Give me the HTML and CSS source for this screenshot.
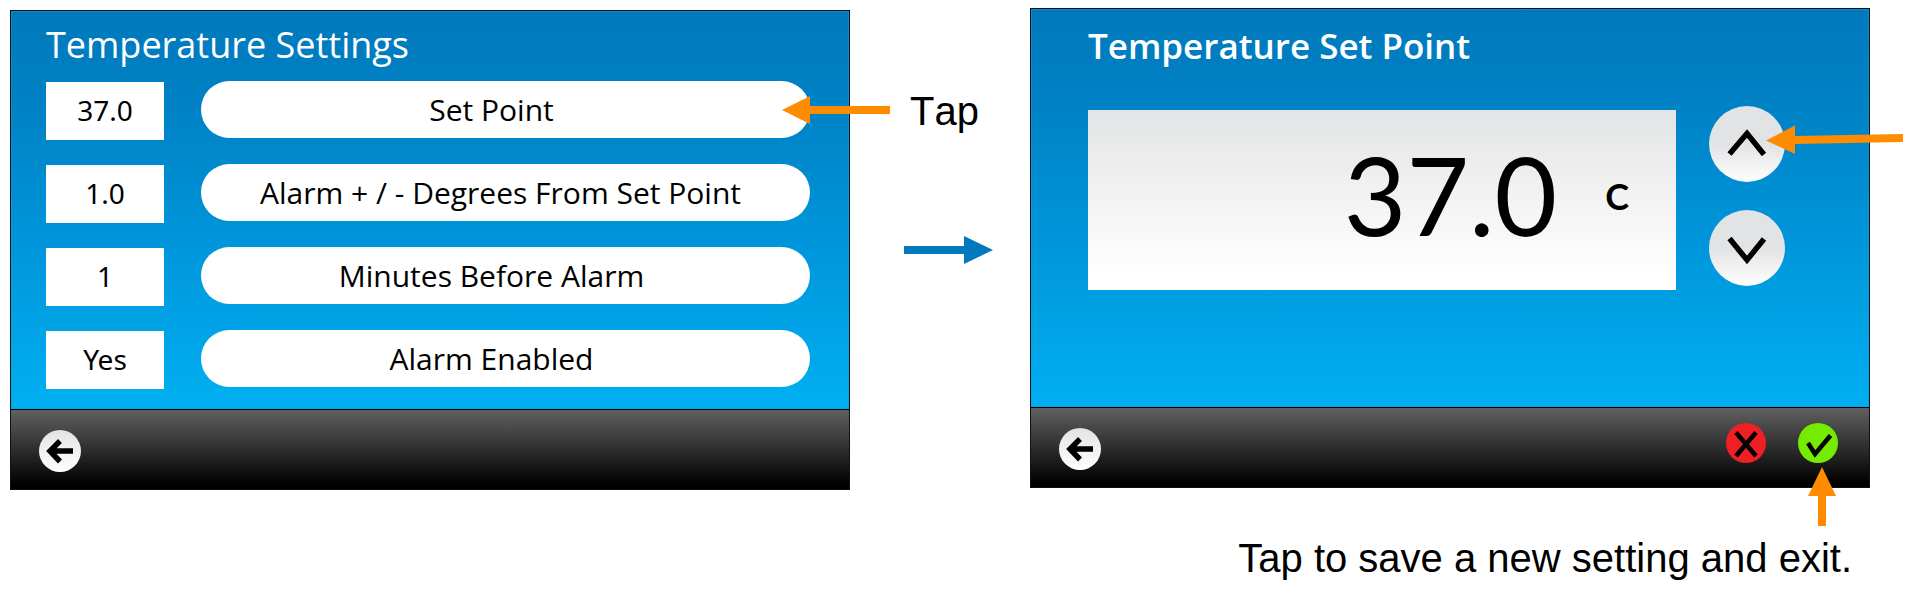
FILE: index.html
```html
<!DOCTYPE html>
<html lang="en">
<head>
<meta charset="utf-8">
<title>Temperature Settings</title>
<link rel="stylesheet" href="styles.css">
</head>
<body>
<main class="guide">
  <section class="screen screen-list">
    <div class="screen-body">
      <h1 class="title">Temperature Settings</h1>
      <div class="rows">
        <div class="row"><output class="value">37.0</output><button class="option">Set Point</button></div>
        <div class="row"><output class="value">1.0</output><button class="option option-long">Alarm + / - Degrees From Set Point</button></div>
        <div class="row"><output class="value">1</output><button class="option">Minutes Before Alarm</button></div>
        <div class="row"><output class="value">Yes</output><button class="option">Alarm Enabled</button></div>
      </div>
    </div>
    <footer class="bar">
      <button class="back" aria-label="Back"><svg width="42" height="42" viewBox="0 0 42 42"><path d="M34 21H13M21 11L11 21L21 31.500" fill="none" stroke="#000" stroke-width="5.500"/></svg></button>
    </footer>
    <svg class="pointer pointer-row" width="108" height="30" viewBox="0 0 108 30"><path d="M0 15L28 1V11H108V19H28V29Z" fill="#ff8c00"/></svg>
  </section>

  <div class="between">
    <p class="note">Tap</p>
    <svg class="next" width="89" height="28" viewBox="0 0 89 28"><path d="M0 10H60V0L89 14L60 28V18H0Z" fill="#0079bd"/></svg>
  </div>

  <div class="second">
    <section class="screen screen-edit">
      <div class="screen-body">
        <h2 class="title title-strong">Temperature Set Point</h2>
        <div class="editor">
          <output class="display"><span class="number">37.0</span><span class="unit">C</span></output>
          <div class="steppers">
            <button class="step" aria-label="Increase"><svg width="76" height="76" viewBox="0 0 76 76"><path d="M20.500 48L38 27.500L55 48.500" fill="none" stroke="#000" stroke-width="5.500"/></svg></button>
            <button class="step" aria-label="Decrease"><svg width="76" height="76" viewBox="0 0 76 76"><path d="M20.500 28.500L38 50L55 29" fill="none" stroke="#000" stroke-width="5.500"/></svg></button>
          </div>
        </div>
      </div>
      <footer class="bar">
        <button class="back" aria-label="Back"><svg width="42" height="42" viewBox="0 0 42 42"><path d="M34 21H13M21 11L11 21L21 31.500" fill="none" stroke="#000" stroke-width="5.500"/></svg></button>
        <div class="decide">
          <button class="round cancel" aria-label="Cancel"><svg width="40" height="40" viewBox="0 0 40 40"><path d="M10 9.500L30 33M30 9.500L10 33" fill="none" stroke="#000" stroke-width="4.500"/></svg></button>
          <button class="round save" aria-label="Save"><svg width="40" height="40" viewBox="0 0 40 40"><path d="M10 20L17 31L32.500 12.500" fill="none" stroke="#000" stroke-width="4.500"/></svg></button>
        </div>
      </footer>
      <svg class="pointer pointer-up" width="137" height="30" viewBox="0 0 137 30"><path d="M0 15.500L29 0.500V11L137 9V17L29 19V29Z" fill="#ff8c00"/></svg>
      <svg class="pointer pointer-save" width="28" height="59" viewBox="0 0 28 59"><path d="M14 0L28 29H18V59H10V29H0Z" fill="#ff8c00"/></svg>
    </section>
    <p class="note caption">Tap to save a new setting and exit.</p>
  </div>
</main>
</body>
</html>
```
FILE: styles.css
```css
* { box-sizing: border-box; }
body {
  margin: 0;
  background: #fff;
  color: #000;
  font-family: "Open Sans", "Noto Sans", sans-serif;
  font-variant-ligatures: none;
}
h1, h2, p { margin: 0; }
button { padding: 0; border: 0; font: inherit; color: inherit; cursor: pointer; }
svg { display: block; }

.guide {
  display: grid;
  grid-template-columns: 840fr 180fr 840fr;
  align-items: start;
  padding: 8px 40px 0 10px;
}
.screen { position: relative; border: 1px solid #111; }
.screen-list { margin-top: 2px; }
.screen-body {
  height: 399px;
  border-bottom: 1px solid #000;
  background: linear-gradient(#0079bb, #0082c6 25%, #0095da 58%, #00adef 96%);
  box-shadow: inset 0 0 0 1px rgba(0, 165, 235, 0.5);
}
.screen-list .screen-body { padding: 11px 39px 0 35px; }
.screen-edit .screen-body { padding: 14px 84px 0 57px; }
.title { font-size: 36px; line-height: 46px; font-weight: 500; color: #fff; }
.title-strong { font-size: 35px; font-weight: 600; }

.rows { display: grid; gap: 23px; margin-top: 13px; }
.row { display: flex; align-items: flex-start; justify-content: space-between; gap: 37px; height: 60px; }
.value {
  flex: none;
  width: 118px;
  height: 58px;
  margin-top: 1px;
  background: #fff;
  font-family: "Noto Sans", sans-serif;
  font-size: 28px;
  line-height: 56px;
  text-align: center;
}
.option {
  flex: 1;
  height: 57px;
  padding: 0 28px 0 0;
  border-radius: 29px;
  background: #fff;
  font-size: 30px;
}
.option-long { padding-right: 10px; }

.bar {
  display: flex;
  align-items: flex-start;
  justify-content: space-between;
  height: 79px;
  padding: 20px 31px 0 28px;
  background: linear-gradient(#606060, #000 95%);
}
.back {
  width: 42px;
  height: 42px;
  border-radius: 50%;
  background: linear-gradient(#e2e3e5, #fff);
}
.decide { display: flex; gap: 32px; margin-top: -5px; }
.round { width: 40px; height: 40px; border-radius: 50%; }
.cancel { background: #ee1f25; }
.save { background: #74eb00; }

.editor { display: flex; gap: 33px; margin-top: 41px; }
.display {
  flex: 1;
  display: flex;
  align-items: flex-start;
  justify-content: flex-end;
  gap: 48px;
  height: 180px;
  padding-right: 47px;
  background: linear-gradient(#e3e4e6, #ecedec 30%, #fff 92%);
  font-family: Lato, sans-serif;
}
.number { font-size: 108px; line-height: 168px; }
.unit { font-size: 36px; line-height: 172px; font-weight: 700; }
.steppers { display: grid; align-content: start; gap: 28px; margin-top: -4px; }
.step {
  width: 76px;
  height: 76px;
  border-radius: 50%;
  background: linear-gradient(#e2e3e5 50%, #fff);
}

.between { padding: 80px 0 0 54px; }
.note { font-family: "Liberation Sans", Arial, sans-serif; font-size: 40px; line-height: 46px; }
.between .note { padding-left: 6px; font-kerning: none; }
.next { margin-top: 102px; }
.caption { margin-top: 47px; padding-right: 18px; text-align: right; }

.pointer { position: absolute; pointer-events: none; }
.pointer-row { top: 84px; right: -41px; }
.pointer-up { top: 116px; right: -34px; }
.pointer-save { top: 458px; right: 33px; }
```
